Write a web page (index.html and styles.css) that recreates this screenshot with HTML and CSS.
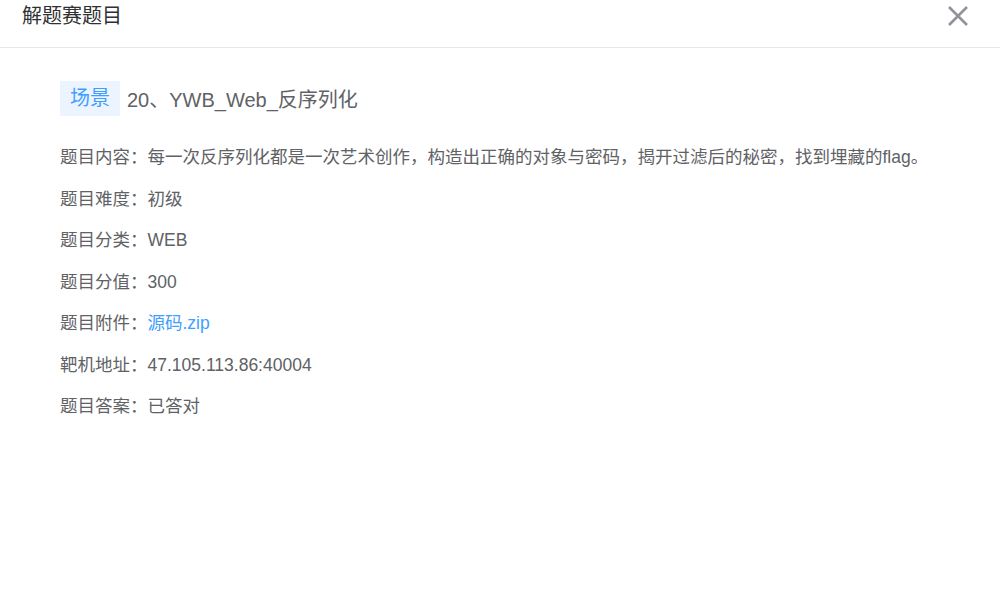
FILE: index.html
```html
<!DOCTYPE html>
<html lang="zh-CN">

<head>
  <meta charset="UTF-8">
  <meta name="viewport" content="width=device-width, initial-scale=1.0">
  <title>解题赛题目</title>
  <link rel="stylesheet" href="styles.css">
</head>

<body>
  <div class="dialog">
    <div class="dialog__header">
      <span class="dialog__title">解题赛题目</span>
      <button class="dialog__close" aria-label="关闭">
        <svg width="20" height="20" viewBox="0 0 20 20">
          <path d="M1 1 L19 19 M19 1 L1 19" stroke="#909399" stroke-width="2.6" fill="none" />
        </svg>
      </button>
    </div>
    <div class="dialog__body">
      <div class="challenge__head">
        <span class="tag">场景</span>
        <span class="challenge__name">20、YWB_Web_反序列化</span>
      </div>
      <ul class="info">
        <li>题目内容：每一次反序列化都是一次艺术创作，构造出正确的对象与密码，揭开过滤后的秘密，找到埋藏的flag。</li>
        <li>题目难度：初级</li>
        <li>题目分类：WEB</li>
        <li>题目分值：300</li>
        <li>题目附件：<a href="#" class="link">源码.zip</a></li>
        <li>靶机地址：47.105.113.86:40004</li>
        <li>题目答案：已答对</li>
      </ul>
    </div>
  </div>
</body>

</html>
```

FILE: styles.css
```css
body {
  margin: 0;
  background: #fff;
  font-family: "Liberation Sans", "Noto Sans CJK SC", sans-serif;
  color: #606266;
}

.dialog {
  width: 1000px;
  height: 610px;
  background: #fff;
}

.dialog__header {
  display: flex;
  align-items: flex-start;
  justify-content: space-between;
  height: 45px;
  padding: 2px 32px 0 22px;
  border-bottom: 1px solid #e6e6e6;
}

.dialog__title {
  font-size: 20px;
  line-height: 28px;
  color: #303133;
}

.dialog__close {
  border: none;
  background: none;
  padding: 0;
  cursor: pointer;
  display: flex;
  margin-top: 4px;
}

.dialog__body {
  padding: 33px 60px;
}

.challenge__head {
  display: flex;
  align-items: center;
  gap: 7px;
}

.tag {
  background: #ecf5ff;
  color: #409eff;
  font-size: 20px;
  height: 35px;
  line-height: 35px;
  padding: 0 10px;
}

.challenge__name {
  font-size: 20px;
  color: #606266;
}

.info {
  list-style: none;
  margin: 21px 0 0;
  padding: 0;
}

.info li {
  font-size: 17.5px;
  line-height: 41.5px;
}

.link {
  color: #409eff;
  text-decoration: none;
}
```
